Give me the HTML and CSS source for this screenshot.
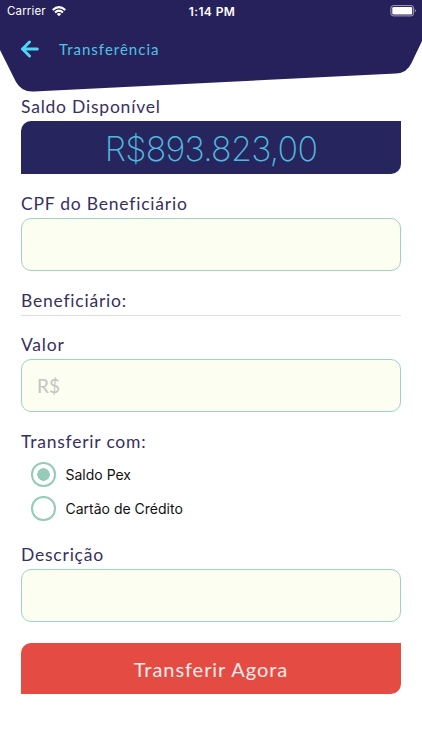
FILE: index.html
```html
<!DOCTYPE html>
<html lang="pt-BR">
<head>
    <meta charset="UTF-8">
    <meta name="viewport" content="width=device-width, initial-scale=1.0">
    <title>Transferência</title>
    <link rel="stylesheet" href="styles.css">
</head>
<body>
    <header class="header">
        <svg class="header-shape" viewBox="0 0 422 93" aria-hidden="true">
            <path d="M0 0H422V41L411.500 63Q407 73 396 73.500L34 91.500Q22 92.500 16 82L0 50Z"/>
        </svg>
        <div class="status-bar">
            <div class="carrier">
                <span>Carrier</span>
                <svg width="14" height="11" viewBox="0 0 14 11" fill="none" stroke="#fff" stroke-width="2">
                    <path d="M.7 4Q7-1.800 13.300 4M3 6.400Q7 2.800 11 6.400"/>
                    <path d="M4.800 8Q7 6.200 9.200 8L7 10.300Z" fill="#fff" stroke="none"/>
                </svg>
            </div>
            <span class="time">1:14 PM</span>
            <svg class="battery" width="27" height="12" viewBox="0 0 27 12">
                <rect x=".9" y=".6" width="22.700" height="10.300" rx="2.500" fill="none" stroke="#a29fbd"/>
                <rect x="2.300" y="2" width="19.900" height="7.500" rx="1.200" fill="#fff"/>
                <path d="M24.800 4Q27 5.700 24.800 7.500Z" fill="#a29fbd"/>
            </svg>
        </div>
        <div class="nav">
            <svg class="back" width="20" height="18" viewBox="0 0 20 18">
                <path d="M9.500 2L2.500 9L9.500 16M3 9H17.300"/>
            </svg>
            <h1>Transferência</h1>
        </div>
    </header>

    <form class="content">
        <label class="label label-balance">Saldo Disponível</label>
        <div class="balance">R$893.823,00</div>

        <label class="label label-cpf" for="cpf">CPF do Beneficiário</label>
        <input class="field" type="text" id="cpf">

        <div class="label beneficiary">Beneficiário:</div>

        <label class="label label-value" for="valor">Valor</label>
        <input class="field" type="text" id="valor" placeholder="R$">

        <div class="label label-method">Transferir com:</div>
        <div class="options">
            <label class="option"><input type="radio" name="metodo" checked>Saldo Pex</label>
            <label class="option option-card"><input type="radio" name="metodo">Cartão de Crédito</label>
        </div>

        <label class="label label-description" for="descricao">Descrição</label>
        <input class="field" type="text" id="descricao">

        <button class="submit" type="button">Transferir Agora</button>
    </form>
</body>
</html>
```

FILE: styles.css
```css
* {
    box-sizing: border-box;
}
body {
    margin: 0;
    background-color: #fff;
    font-family: Lato, sans-serif;
    color: #37305f;
}

/* header */
.header {
    position: relative;
    height: 93px;
}
.header-shape {
    position: absolute;
    top: 0;
    left: 0;
    width: 100%;
    height: 93px;
    fill: #27215b;
}
.status-bar {
    position: relative;
    display: grid;
    grid-template-columns: 1fr auto 1fr;
    align-items: center;
    height: 22px;
    padding: 0 5px 0 7px;
    font-family: Inter, sans-serif;
    font-size: 11.5px;
    color: #fff;
}
.carrier {
    display: flex;
    align-items: center;
    gap: 6px;
    letter-spacing: 0.15px;
}
.time {
    font-weight: 600;
    font-size: 12px;
    letter-spacing: 0.4px;
}
.battery {
    justify-self: end;
}
.nav {
    position: relative;
    display: flex;
    align-items: center;
    height: 54px;
    padding-left: 20px;
    gap: 19px;
}
.back {
    fill: none;
    stroke: #51d5f6;
    stroke-width: 3;
    stroke-linecap: round;
    stroke-linejoin: round;
}
.nav h1 {
    margin: 0;
    font-size: 15px;
    font-weight: 400;
    letter-spacing: 1px;
    color: #4fc4e6;
}

/* form */
.content {
    display: flex;
    flex-direction: column;
    padding: 0 21px;
}
.label {
    height: 28px;
    line-height: 28px;
    font-size: 17.5px;
    letter-spacing: 0.78px;
    white-space: nowrap;
}
.balance {
    height: 53px;
    line-height: 56px;
    border-radius: 10px 0 10px 0;
    background-color: #27255d;
    color: #51b9df;
    font-family: Inter, sans-serif;
    font-size: 34px;
    font-weight: 200;
    letter-spacing: -0.75px;
    text-align: center;
}
.label-cpf {
    margin-top: 16px;
}
.field {
    width: 100%;
    height: 53px;
    padding: 0 15px;
    border: 1px solid #a1d1c2;
    border-radius: 10px;
    background-color: #fbfef0;
    font-family: Lato, sans-serif;
    font-size: 19px;
    color: #37305f;
    outline: none;
}
.field::placeholder {
    color: #c4c6be;
}
.beneficiary {
    height: 29px;
    margin-top: 16px;
    border-bottom: 1px solid #dcdce3;
}
.label-value {
    margin-top: 15px;
}
.label-method {
    margin-top: 16px;
}
.options {
    padding: 6px 0 0 10px;
}
.option {
    display: flex;
    align-items: center;
    gap: 10px;
    height: 25px;
    font-family: Inter, sans-serif;
    font-size: 14px;
    color: #111;
}
.option-card {
    margin-top: 9px;
}
.option input {
    appearance: none;
    width: 24.5px;
    height: 24.5px;
    margin: 0;
    border: 2px solid #94cbb9;
    border-radius: 50%;
}
.option input:checked {
    background: radial-gradient(circle, #94cbb9 6px, transparent 6.5px);
}
.label-description {
    margin-top: 20px;
}
.submit {
    height: 51px;
    margin-top: 21px;
    border: 0;
    border-radius: 10px 0 10px 0;
    background-color: #e44c43;
    color: #fcebe9;
    font-family: Lato, sans-serif;
    font-size: 20px;
    letter-spacing: 0.95px;
}
```
